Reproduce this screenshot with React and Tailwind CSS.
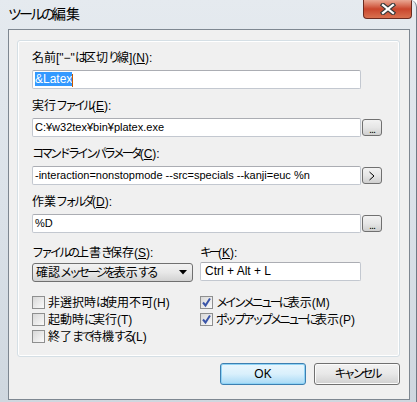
import React from 'react';

const font = { fontFamily: '"Liberation Sans", "Noto Sans CJK JP", sans-serif' };

// Meiryo UI draws kana narrow: tighten kana runs so the labels keep their widths
function jp(text) {
  return text.split(/([\u3040-\u30ff]+)/).map((part, i) =>
    /[\u3040-\u30ff]/.test(part) ? (
      <span key={i} className="tracking-[-3px]">{part}</span>
    ) : (
      part
    )
  );
}

function Label({ children, className = '' }) {
  return <div className={`h-[16px] text-[12px] leading-[16px] text-black whitespace-nowrap ${className}`}>{children}</div>;
}

function TextBox({ children, className = '' }) {
  return (
    <div className={`h-[19px] border border-[#c3c8d0] border-t-[#abadb3] rounded-[2px] bg-white px-[2px] text-[11px] leading-[17px] text-black whitespace-nowrap overflow-hidden ${className}`}>
      {children}
    </div>
  );
}

function SmallButton({ children }) {
  return (
    <div className="ml-[1px] w-[20px] h-[17px] mt-[1px] border border-[#707070] rounded-[3px] bg-gradient-to-b from-[#f2f2f2] via-[#e6e6e6] to-[#cfcfcf] flex items-center justify-center text-[11px] leading-none text-black">
      {children}
    </div>
  );
}

function CheckBox({ checked, label }) {
  return (
    <div className="h-[17px] flex items-center">
      <div className="w-[13px] h-[13px] border border-[#8e8f8f] bg-gradient-to-br from-[#d8d8d8] to-[#fafafa] flex items-center justify-center">
        {checked && (
          <svg width="11" height="11" viewBox="0 0 11 11">
            <path d="M2 5.5 L4.5 8.5 L9 1.5" fill="none" stroke="#3a55a8" strokeWidth="2" />
          </svg>
        )}
      </div>
      <span className="ml-[3px] text-[12px] leading-[16px] whitespace-nowrap">{jp(label)}</span>
    </div>
  );
}

export default function App() {
  return (
    <div style={font} className="w-[417px] h-[402px] overflow-hidden bg-gradient-to-b from-[#e5eaef] via-[#dbe2e9] to-[#cfd7df] rounded-tr-[7px] border-r border-[#6f7a86] flex flex-col">
      {/* title bar */}
      <div className="h-[29px] flex items-start">
        <div className="pl-[8px] pt-[5px] text-[14px] leading-[18px] text-black">{jp('ツールの編集')}</div>
        <div className="ml-auto mr-[4px] w-[49px] h-[19px] rounded-b-[4px] border border-t-0 border-[#6b2b20] bg-gradient-to-b from-[#e9a793] via-[#c9452c] to-[#d8704f] flex items-center justify-center">
          <svg width="16" height="12" viewBox="0 0 16 12">
            <path d="M3 2 L13 10 M13 2 L3 10" stroke="#3b3b3b" strokeWidth="4.5" strokeLinecap="square" />
            <path d="M3 2 L13 10 M13 2 L3 10" stroke="#ffffff" strokeWidth="2.2" strokeLinecap="square" />
          </svg>
        </div>
      </div>

      {/* client area */}
      <div className="ml-[8px] w-[402px] h-[371px] border border-[#7e8791] bg-[#f0f0f0] pl-[8px] pt-[10px] flex flex-col">
        <div className="w-[383px] h-[317px] border border-[#d5dfe5] rounded-[3px] shadow-[inset_0_0_0_1px_#ffffff] pl-[14px] pt-[9px]">
          <Label>{jp('名前["−"は区切り線]')}(<u>N</u>):</Label>
          <TextBox className="mt-[4px] w-[329px]">
            <span className="bg-[#3399ff] text-white text-[12px]">&amp;Latex</span>
            <span className="inline-block w-[1px] h-[13px] bg-[#c85a00] align-middle" />
          </TextBox>

          <Label className="mt-[9px]">{jp('実行ファイル')}(<u>E</u>):</Label>
          <div className="mt-[4px] flex">
            <TextBox className="w-[329px]">C:¥w32tex¥bin¥platex.exe</TextBox>
            <SmallButton><span className="mt-[4px] tracking-[-1px]">...</span></SmallButton>
          </div>

          <Label className="mt-[9px]">{jp('コマンドラインパラメータ')}(<u>C</u>):</Label>
          <div className="mt-[4px] flex">
            <TextBox className="w-[329px]">-interaction=nonstopmode --src=specials --kanji=euc %n</TextBox>
            <SmallButton>
              <svg width="8" height="10" viewBox="0 0 8 10">
                <path d="M1.5 1 L6 5 L1.5 9" fill="none" stroke="#000" strokeWidth="1" />
              </svg>
            </SmallButton>
          </div>

          <Label className="mt-[9px]">{jp('作業フォルダ')}(<u>D</u>):</Label>
          <div className="mt-[4px] flex">
            <TextBox className="w-[329px]">%D</TextBox>
            <SmallButton><span className="mt-[4px] tracking-[-1px]">...</span></SmallButton>
          </div>

          <div className="mt-[12px] flex">
            <div className="w-[168px]">
              <Label>{jp('ファイルの上書き保存')}(<u>S</u>):</Label>
              <div className="mt-[2px] w-[161px] h-[19px] border border-[#707070] rounded-[3px] bg-gradient-to-b from-[#f2f2f2] via-[#e8e8e8] to-[#d2d2d2] flex items-center pl-[3px] pr-[5px] text-[12px] leading-[16px] whitespace-nowrap">
                <span>{jp('確認メッセージを表示する')}</span>
                <svg className="ml-auto" width="8" height="5" viewBox="0 0 8 5">
                  <path d="M0 0 L8 0 L4 4.5 Z" fill="#000" />
                </svg>
              </div>
            </div>
            <div>
              <Label>{jp('キー')}(<u>K</u>):</Label>
              <TextBox className="mt-[1px] w-[161px] px-[4px] text-[12px]">Ctrl + Alt + L</TextBox>
            </div>
          </div>

          <div className="mt-[12px] flex">
            <div className="w-[168px]">
              <CheckBox label="非選択時は使用不可(H)" />
              <CheckBox label="起動時に実行(T)" />
              <CheckBox label="終了まで待機する(L)" />
            </div>
            <div>
              <CheckBox checked label="メインメニューに表示(M)" />
              <CheckBox checked label="ポップアップメニューに表示(P)" />
            </div>
          </div>
        </div>

        <div className="w-[383px] mt-[6px] flex justify-end gap-[8px]">
          <div className="w-[86px] h-[22px] border border-[#3c7fb1] rounded-[3px] bg-gradient-to-b from-[#eaf6fd] via-[#d9f0fc] to-[#a7d9f5] shadow-[inset_0_0_0_1px_#8fd3f5] flex items-center justify-center text-[12px]">OK</div>
          <div className="w-[86px] h-[22px] border border-[#707070] rounded-[3px] bg-gradient-to-b from-[#f2f2f2] via-[#e8e8e8] to-[#d0d0d0] shadow-[inset_0_0_0_1px_#fbfbfb] flex items-center justify-center text-[12px]">{jp('キャンセル')}</div>
        </div>
      </div>
    </div>
  );
}
